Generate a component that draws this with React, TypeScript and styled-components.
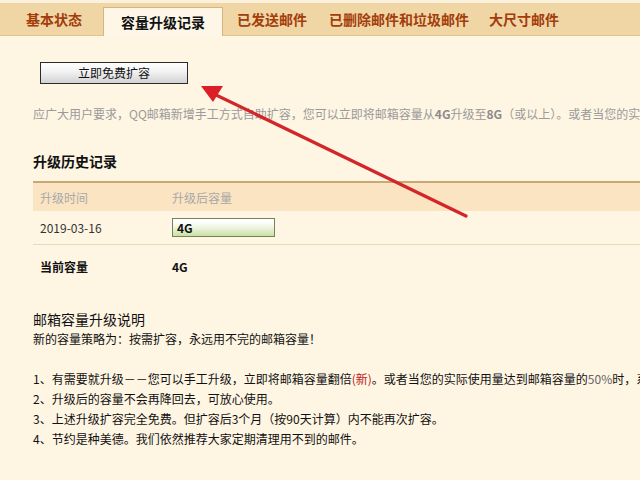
import React from "react";
import styled, { createGlobalStyle } from "styled-components";

const GlobalStyle = createGlobalStyle`
  html, body {
    margin: 0;
    padding: 0;
    background: #fef5e3;
    overflow: hidden;
  }
  body {
    font-family: "Noto Sans CJK SC", "Liberation Sans", sans-serif;
    font-size: 12px;
    color: #222;
  }
`;

const Page = styled.div`
  position: relative;
  width: 640px;
  height: 480px;
  overflow: hidden;
  background: #fef5e3;
  border-top: 3px solid #fcf1dd;
  box-sizing: border-box;
`;

const TabBar = styled.div`
  display: flex;
  align-items: flex-end;
  height: 33px;
  padding-left: 5px;
  background: #efd6a4;
  border-bottom: 1px solid #e2c48c;
  box-sizing: border-box;
`;

const Tab = styled.div<{ $active?: boolean; $pad: number }>`
  display: flex;
  align-items: center;
  height: ${(p) => (p.$active ? "29px" : "33px")};
  padding: 0 ${(p) => p.$pad}px;
  margin-bottom: ${(p) => (p.$active ? "-1px" : "0")};
  font-size: 14px;
  font-weight: bold;
  white-space: nowrap;
  color: ${(p) => (p.$active ? "#111" : "#a33d0c")};
  background: ${(p) => (p.$active ? "#fef7e8" : "transparent")};
  border: ${(p) => (p.$active ? "1px solid #d7b57c" : "none")};
  border-bottom: none;
  box-sizing: border-box;
  ${(p) => (p.$active ? "margin-right: 2px;" : "")}
`;

const Content = styled.div`
  padding: 26px 0 0 33px;
  white-space: nowrap;
`;

const FreeButton = styled.button`
  display: block;
  margin-left: 7px;
  width: 148px;
  height: 22px;
  padding: 0;
  border: 1px solid #2b2b2b;
  background: linear-gradient(#ffffff, #f1f1f1 45%, #d2d2d2);
  font-family: inherit;
  font-size: 12px;
  color: #111;
  line-height: 20px;
`;

const Intro = styled.p`
  margin: 20px 0 0;
  line-height: 20px;
  color: #9a9a9a;
  b {
    color: #8c8c8c;
  }
`;

const SectionTitle = styled.h3`
  margin: 27px 0 0;
  font-size: 14px;
  font-weight: bold;
  line-height: 20px;
  color: #111;
`;

const Table = styled.div`
  margin-top: 10px;
  border-top: 2px solid #c9a876;
`;

const Row = styled.div<{ $head?: boolean; $height: number; $line?: boolean }>`
  display: grid;
  grid-template-columns: 139px 1fr;
  align-items: center;
  height: ${(p) => p.$height}px;
  background: ${(p) => (p.$head ? "#fbe4c2" : "transparent")};
  color: ${(p) => (p.$head ? "#a8a8a8" : "#333")};
  border-bottom: ${(p) => (p.$line ? "1px solid #ecd8b6" : "none")};
  span:first-child {
    padding-left: 7px;
  }
`;

const BoldCell = styled.span`
  font-weight: bold;
  color: #111;
`;

const Meter = styled.span`
  display: flex;
  align-items: center;
  width: 103px;
  height: 19px;
  padding-left: 4px;
  box-sizing: border-box;
  border: 1px solid #74845a;
  background: linear-gradient(#ffffff 15%, #eaf3dc 55%, #c9e0a2);
  font-weight: bold;
  color: #111;
`;

const NoteTitle = styled.div`
  margin-top: 21px;
  font-size: 14px;
  line-height: 20px;
  color: #111;
`;

const NoteText = styled.div`
  line-height: 20px;
  color: #111;
`;

const NoteList = styled.ol`
  list-style: none;
  margin: 20px 0 0;
  padding: 0;
  li {
    line-height: 20px;
    color: #111;
  }
`;

const New = styled.span`
  color: #c0201a;
`;

const Soft = styled.span`
  color: #666;
`;

const ArrowLayer = styled.svg`
  position: absolute;
  left: 0;
  top: 0;
  pointer-events: none;
`;

const tabs = [
  { label: "基本状态", pad: 21 },
  { label: "容量升级记录", pad: 17, active: true },
  { label: "已发送邮件", pad: 12 },
  { label: "已删除邮件和垃圾邮件", pad: 10 },
  { label: "大尺寸邮件", pad: 10 },
];

const App = () => (
  <Page>
    <GlobalStyle />
    <TabBar>
      {tabs.map((t) => (
        <Tab key={t.label} $active={t.active} $pad={t.pad}>
          {t.label}
        </Tab>
      ))}
    </TabBar>
    <Content>
      <FreeButton>立即免费扩容</FreeButton>
      <Intro>
        应广大用户要求，QQ邮箱新增手工方式自助扩容，您可以立即将邮箱容量从<b>4G</b>升级至<b>8G</b>（或以上）。或者当您的实际使用量达到邮箱容量的50%时
      </Intro>
      <SectionTitle>升级历史记录</SectionTitle>
      <Table>
        <Row $head $height={28}>
          <span>升级时间</span>
          <span>升级后容量</span>
        </Row>
        <Row $height={33} $line>
          <span>2019-03-16</span>
          <Meter>4G</Meter>
        </Row>
        <Row $height={43}>
          <BoldCell>当前容量</BoldCell>
          <BoldCell>4G</BoldCell>
        </Row>
      </Table>
      <NoteTitle>邮箱容量升级说明</NoteTitle>
      <NoteText>新的容量策略为：按需扩容，永远用不完的邮箱容量！</NoteText>
      <NoteList>
        <li>
          1、有需要就升级－－您可以手工升级，立即将邮箱容量翻倍<New>(新)</New>。或者当您的实际使用量达到邮箱容量的<Soft>50%</Soft>时，系统将自动为您升级。
        </li>
        <li>2、升级后的容量不会再降回去，可放心使用。</li>
        <li>3、上述升级扩容完全免费。但扩容后3个月（按90天计算）内不能再次扩容。</li>
        <li>4、节约是种美德。我们依然推荐大家定期清理用不到的邮件。</li>
      </NoteList>
    </Content>
    <ArrowLayer width="640" height="480" viewBox="0 0 640 480">
      <line x1="466" y1="213" x2="214" y2="91" stroke="#d3262a" strokeWidth="3.2" strokeLinecap="round" />
      <polygon points="201,83 223,83 213,99" fill="#dc1f26" />
    </ArrowLayer>
  </Page>
);

export default App;
